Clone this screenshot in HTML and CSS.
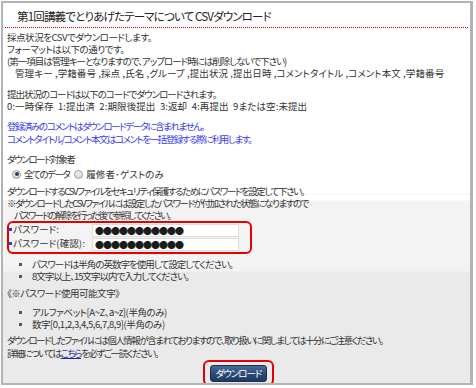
FILE: index.html
```html
<!DOCTYPE html>
<html lang="ja">
<head>
  <meta charset="UTF-8">
  <title>CSVダウンロード</title>
  <link rel="stylesheet" href="styles.css">
</head>
<body>
  <div class="frame">
    <h1 class="title">第1回講義でとりあげたテーマについて&nbsp;CSVダウンロード</h1>

    <div class="content">
      <p class="block">
        <span class="sp-1">採点状況をCSVでダウンロードします。</span><br>
        <span class="sp-1">フォーマットは以下の通りです。</span><br>
        <span class="sp-2">(第一項目は管理キーとなりますので、アップロード時には削除しないで下さい)</span><br>
        <span class="indent sp-0">管理キー ,学籍番号 ,採点 ,氏名 ,グループ ,提出状況 ,提出日時 ,コメントタイトル ,コメント本文 ,学籍番号</span>
      </p>

      <p class="block">
        <span class="sp-2">提出状況のコードは以下のコードでダウンロードされます。</span><br>
        <span class="sp-0">0:一時保存&nbsp; 1:提出済&nbsp; 2:期限後提出&nbsp; 3:返却&nbsp; 4:再提出&nbsp; 9または空:未提出</span>
      </p>

      <p class="block notice">
        登録済みのコメントはダウンロードデータに含まれません。<br>
        コメントタイトル/コメント本文はコメントを一括登録する際に利用します。
      </p>

      <div class="block">
        <div>ダウンロード対象者</div>
        <div class="radios">
          <label class="radio-item"><input type="radio" name="target" checked>全てのデータ</label>
          <label class="radio-item sp-0"><input type="radio" name="target">履修者･ゲストのみ</label>
        </div>
      </div>

      <div class="pw-section">
        <p>
          ダウンロードするCSVファイルをセキュリティ保護するためにパスワードを設定して下さい。<br>
          ※ダウンロードしたCSVファイルには設定したパスワードが付加された状態になりますので<br>
          <span class="indent-sm sp-4">パスワードの解除を行った後で参照してください。</span>
        </p>

        <div class="pw-box">
          <div class="pw-row">
            <span class="pw-label">パスワード:</span>
            <span class="pw-input">●●●●●●●●●●●</span>
          </div>
          <div class="pw-row">
            <span class="pw-label">パスワード(確認):</span>
            <span class="pw-input">●●●●●●●●●●●</span>
          </div>
        </div>

        <ul class="rules sp-2">
          <li>パスワードは半角の英数字を使用して設定してください。</li>
          <li>8文字以上、15文字以内で入力してください。</li>
        </ul>

        <div class="chars-title sp-1">《※パスワード使用可能文字》</div>
        <ul class="rules chars sp-1">
          <li>アルファベット[A~Z、a~z](半角のみ)</li>
          <li>数字[0,1,2,3,4,5,6,7,8,9](半角のみ)</li>
        </ul>
      </div>

      <p class="caution">
        ダウンロードしたファイルには個人情報が含まれておりますので、取り扱いに関しましては十分にご注意ください。<br>
        詳細については<a href="#" class="link">こちら</a>を必ずご一読ください。
      </p>

      <div class="actions">
        <div class="btn-ring">
          <button class="dl-btn">ダウンロード</button>
        </div>
      </div>
    </div>
  </div>
</body>
</html>
```

FILE: styles.css
```css
html, body {
  margin: 0;
  padding: 0;
  background-color: #ffffff;
}

body {
  font-family: "Noto Sans CJK JP", "Liberation Sans", sans-serif;
  font-feature-settings: "palt";
  font-size: 9.5px;
  letter-spacing: -1.45px;
  line-height: 12.3px;
  color: #333333;
}

/* letter-spacing steps to match the narrow original font */
.sp-0 { letter-spacing: 0.1px; }
.sp-1 { letter-spacing: -0.45px; }
.sp-2 { letter-spacing: -1px; }
.sp-4 { letter-spacing: -1.8px; }

.frame {
  margin: 1px 3px 0 1px;
  height: 384px;
  box-sizing: border-box;
  border: 2px solid #b3b3b3;
  border-right-width: 3px;
  background: linear-gradient(to bottom, #ffffff 0, #ffffff 190px, #f4f4f4 191px, #ffffff 192px, #ffffff 197px, #f3f3f3 198px, #f3f3f3 268px, #eaeaea 269px, #eaeaea 100%);
  overflow: hidden;
}

.title {
  margin: 0 2px;
  padding: 5px 0 0 12px;
  height: 19px;
  font-size: 11.5px;
  letter-spacing: -0.83px;
  line-height: 16px;
  font-weight: normal;
  color: #222222;
  border-bottom: 1px dotted #cc0000;
}

.content {
  padding: 2.5px 0 0 4px;
}

.block {
  margin: 0 0 8px 0;
}

p {
  margin: 0;
}

.indent {
  padding-left: 8px;
}

.indent-sm {
  padding-left: 7px;
}

.notice {
  color: #3a3af0;
}

.radios {
  display: flex;
  gap: 5px;
  margin-top: 2px;
  height: 14px;
  align-items: center;
}

.radio-item {
  display: flex;
  align-items: center;
}

.radio-item input {
  appearance: none;
  -webkit-appearance: none;
  margin: 0 3px 0 5px;
  width: 9px;
  height: 9px;
  border: 1px solid #9a9a9a;
  border-radius: 50%;
  background: linear-gradient(#f2f2f2, #d9d9d9);
  box-sizing: border-box;
  position: relative;
}

.radio-item input:checked::after {
  content: "";
  position: absolute;
  left: 1.5px;
  top: 1.5px;
  width: 4px;
  height: 4px;
  border-radius: 50%;
  background: #2a3f5f;
}

.radio-item + .radio-item input {
  margin-left: 0;
}

.pw-section {
  margin-top: -3px;
  line-height: 11.7px;
}

.pw-box {
  margin: 0;
  width: 245px;
  box-sizing: border-box;
  border: 2px solid #e60000;
  border-radius: 6px;
  padding: 0 0 1px 0;
}

.pw-row {
  display: flex;
  align-items: center;
  height: 14px;
}

.pw-label {
  width: 83px;
  padding-left: 4px;
  box-sizing: border-box;
  position: relative;
  letter-spacing: 0.1px;
}

.pw-label::before {
  content: "";
  position: absolute;
  left: 0;
  top: 4px;
  width: 3px;
  height: 3px;
  background: #1f3fd6;
}

.pw-input {
  width: 147px;
  height: 13px;
  box-sizing: border-box;
  border: 1px solid #dddddd;
  background: #ffffff;
  padding-left: 2px;
  font-size: 9px;
  line-height: 11px;
  letter-spacing: -1px;
  color: #1c1c1c;
}

.rules {
  margin: 4px 0 4px 0;
  padding-left: 25px;
  list-style: square;
}

.rules.chars {
  margin-top: 6px;
}

.rules li {
  line-height: 12px;
}

.rules li::marker {
  color: #555555;
  font-size: 8px;
}

.chars-title {
  margin-top: 2px;
  line-height: 14px;
}

.caution {
  margin-top: 4px;
}

.link {
  color: #1a2f9c;
  text-decoration: underline;
}

.actions {
  display: flex;
  justify-content: center;
  margin-top: 1px;
}

.btn-ring {
  border: 2px solid #e60000;
  border-radius: 6px;
  padding: 3px 5px 2px;
}

.dl-btn {
  display: block;
  width: 57px;
  height: 17px;
  padding: 0;
  border: 1px solid #1b2f4c;
  border-radius: 3px;
  background: linear-gradient(to bottom, #4a6a96 0%, #2c4b78 50%, #1f3a63 100%);
  color: #ffffff;
  font-family: "Noto Sans CJK JP", "Liberation Sans", sans-serif;
  font-feature-settings: "palt";
  font-size: 9.5px;
  letter-spacing: -1px;
  line-height: 15px;
  cursor: pointer;
}
```
